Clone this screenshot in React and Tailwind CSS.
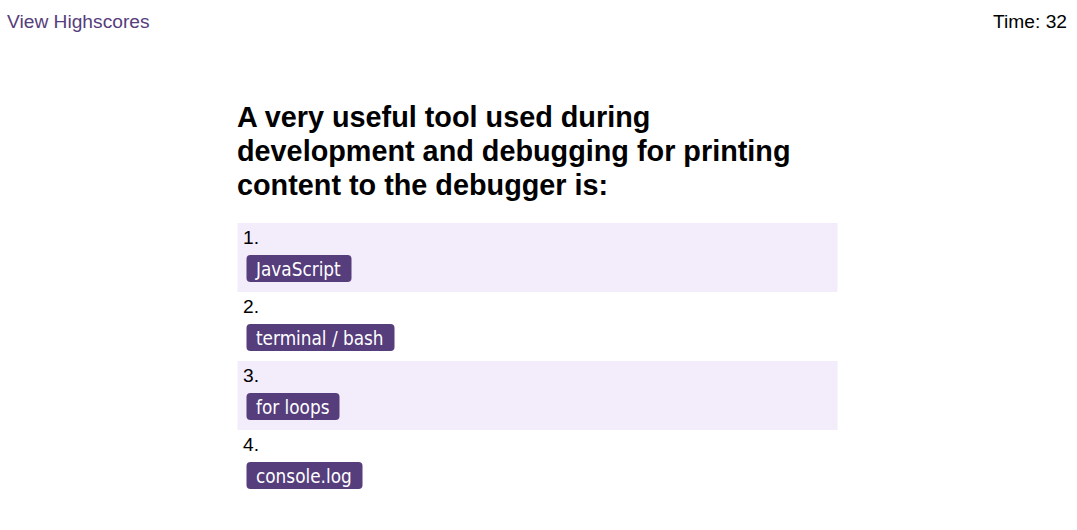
import React from "react";

const answers = ["JavaScript", "terminal / bash", "for loops", "console.log"];

export default function App() {
  return (
    <div className="min-h-[530px] bg-white text-black" style={{ fontFamily: '"Liberation Sans", Arial, sans-serif' }}>
      <header className="flex justify-between items-center px-[7px] pt-[10px] text-[19.2px] leading-[23px]">
        <a className="text-[#563d7c] cursor-pointer">View Highscores</a>
        <span className="mr-[3px]">Time: 32</span>
      </header>
      <main className="mx-auto w-[600px] mt-[67px] translate-x-[-1.5px]">
        <h1 className="w-[570px] font-bold text-[28.8px] leading-[34px]">
          A very useful tool used during development and debugging for printing content to the debugger is:
        </h1>
        <ol className="mt-[21px]">
          {answers.map((a, i) => (
            <li
              key={a}
              className={`flex flex-col items-start pt-[4px] pb-[10px] px-[6px] h-[69px] ${i % 2 === 0 ? "bg-[#f3ecfa]" : "bg-white"}`}
            >
              <div className="text-[19.2px] leading-[22px]">{i + 1}.</div>
              <button
                className="mt-[6px] ml-[3px] h-[27px] pl-[10px] pr-[10.5px] pt-[2px] flex items-center rounded-[4px] bg-[#563d7c] text-white text-[18.8px] leading-[24px]"
                style={{ fontFamily: '"DejaVu Sans Condensed", "DejaVu Sans", sans-serif' }}
              >
                {a}
              </button>
            </li>
          ))}
        </ol>
      </main>
    </div>
  );
}
